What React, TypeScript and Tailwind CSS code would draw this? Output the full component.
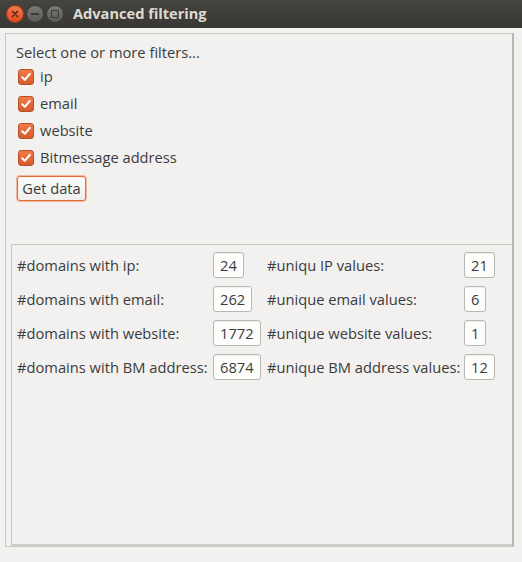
import React from "react";

const font = { fontFamily: '"Open Sans", "DejaVu Sans", sans-serif' };

function Check({ label }: { label: string }) {
  return (
    <div className="flex items-center h-[27px] pl-[2px]">
      <span className="w-[16px] h-[16px] rounded-[3px] border border-[#b4512a] bg-gradient-to-b from-[#f27a48] to-[#d75a2c] flex items-center justify-center">
        <svg width="12" height="12" viewBox="0 0 12 12">
          <path d="M2.2 6.2 L4.8 8.8 L9.8 2.8" fill="none" stroke="#fff" strokeWidth="2" strokeLinecap="round" strokeLinejoin="round" />
        </svg>
      </span>
      <span className="ml-[6px]">{label}</span>
    </div>
  );
}

function Val({ v }: { v: string }) {
  return (
    <span className="justify-self-start h-[26px] px-[6px] rounded-[3px] border border-[#b9b7b3] bg-[#fdfdfc] flex items-center justify-center shadow-[inset_0_1px_1px_rgba(0,0,0,0.06)]">
      {v}
    </span>
  );
}

export default function App() {
  const rows: [string, string, string, string][] = [
    ["#domains with ip:", "24", "#uniqu IP values:", "21"],
    ["#domains with email:", "262", "#unique email values:", "6"],
    ["#domains with website:", "1772", "#unique website values:", "1"],
    ["#domains with BM address:", "6874", "#unique BM address values:", "12"],
  ];
  return (
    <div className="w-[522px] h-[562px] bg-[#f2f1f0] text-[#3c3c3c] text-[14.7px] flex flex-col overflow-hidden" style={font}>
      <div className="h-[28px] bg-gradient-to-b from-[#45443f] to-[#383733] flex items-center pl-[6px] shrink-0">
        <span className="w-[18px] h-[18px] rounded-full bg-gradient-to-b from-[#f4774a] to-[#df4b1f] border border-[#a8391a] flex items-center justify-center">
          <svg width="8" height="8" viewBox="0 0 8 8">
            <path d="M1.5 1.5 L6.5 6.5 M6.5 1.5 L1.5 6.5" stroke="#3a2015" strokeWidth="1.4" strokeLinecap="round" />
          </svg>
        </span>
        <span className="ml-[2px] w-[18px] h-[18px] rounded-full bg-gradient-to-b from-[#7b7a75] to-[#5a5955] border border-[#3a3935] flex items-center justify-center">
          <span className="w-[8px] h-[2px] bg-[#3a3935]" />
        </span>
        <span className="ml-[2px] w-[18px] h-[18px] rounded-full bg-gradient-to-b from-[#7b7a75] to-[#5a5955] border border-[#3a3935] flex items-center justify-center">
          <span className="w-[8px] h-[8px] border-[1.5px] border-[#3a3935] rounded-[1px]" />
        </span>
        <span className="ml-[9px] text-[#dfdbd2] font-bold text-[14.6px]">Advanced filtering</span>
      </div>
      <div className="pt-[5px] pl-[5px] shrink-0">
        <div className="w-[509px] h-[514px] border-l border-t border-b border-[#cac8c4] border-r-2 border-r-[#b9b7b3] flex flex-col">
          <div className="pl-[10px] pt-[8px] h-[210px] shrink-0">
            <div className="h-[20px] flex items-center">Select one or more filters...</div>
            <div className="mt-[1px]">
              <Check label="ip" />
              <Check label="email" />
              <Check label="website" />
              <Check label="Bitmessage address" />
            </div>
            <button className="mt-[5px] ml-[1px] h-[25px] w-[69px] rounded-[3px] border border-[#df6a3a] ring-1 ring-[#f3b79c] bg-gradient-to-b from-[#fbfbfa] to-[#f0efed] text-[#3c3c3c] flex items-center justify-center">
              Get data
            </button>
          </div>
          <div className="ml-[5px] flex-1 border-l border-t border-[#cac8c4] border-b-2 border-b-[#cfcdc9] pl-[5px] pt-[7px]">
            <div className="grid grid-cols-[196px_54px_197px_auto] gap-y-[8px] items-center">
              {rows.map((r, i) => (
                <React.Fragment key={i}>
                  <span>{r[0]}</span>
                  <Val v={r[1]} />
                  <span>{r[2]}</span>
                  <Val v={r[3]} />
                </React.Fragment>
              ))}
            </div>
          </div>
        </div>
      </div>
    </div>
  );
}
